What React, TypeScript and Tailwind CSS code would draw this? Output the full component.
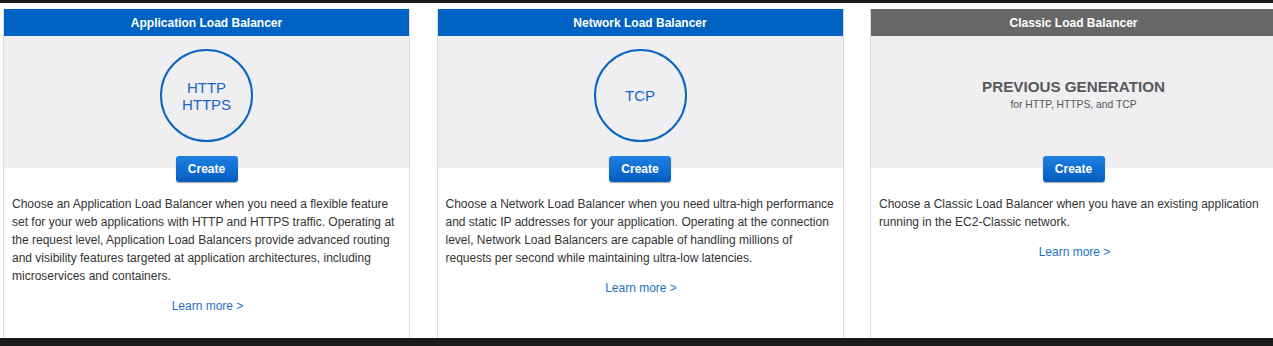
import React from "react";

interface Balancer {
  title: string;
  headerColor: string;
  kind: "circle" | "legacy";
  lines?: string[];
  description: string;
}

const balancers: Balancer[] = [
  {
    title: "Application Load Balancer",
    headerColor: "blue",
    kind: "circle",
    lines: ["HTTP", "HTTPS"],
    description:
      "Choose an Application Load Balancer when you need a flexible feature set for your web applications with HTTP and HTTPS traffic. Operating at the request level, Application Load Balancers provide advanced routing and visibility features targeted at application architectures, including microservices and containers.",
  },
  {
    title: "Network Load Balancer",
    headerColor: "blue",
    kind: "circle",
    lines: ["TCP"],
    description:
      "Choose a Network Load Balancer when you need ultra-high performance and static IP addresses for your application. Operating at the connection level, Network Load Balancers are capable of handling millions of requests per second while maintaining ultra-low latencies.",
  },
  {
    title: "Classic Load Balancer",
    headerColor: "gray",
    kind: "legacy",
    description:
      "Choose a Classic Load Balancer when you have an existing application running in the EC2-Classic network.",
  },
];

const BalancerCard: React.FC<{ item: Balancer }> = ({ item }) => {
  return (
    <div className="w-[407px] shrink-0 flex flex-col border-x border-[#dcdcdc] bg-white">
      {/* Header */}
      <div
        className={
          item.headerColor === "blue"
            ? "h-[27px] flex items-center justify-center bg-[#0063c3] text-white text-[12px] font-bold"
            : "h-[27px] flex items-center justify-center bg-[#676767] text-white text-[12px] font-bold"
        }
      >
        {item.title}
      </div>

      {/* Protocol area */}
      <div className="h-[132px] bg-[#efeef0] flex justify-center pt-[13px]">
        {item.kind === "circle" ? (
          <div className="w-[93px] h-[93px] rounded-full border-[2.5px] border-[#0a66c2] flex flex-col items-center justify-center text-[#1867c4] text-[15px] leading-[17px]">
            {item.lines?.map((l) => (
              <span key={l}>{l}</span>
            ))}
          </div>
        ) : (
          <div className="h-[93px] flex flex-col items-center justify-center">
            <span className="text-[15.2px] font-bold text-[#595959] leading-[18px]">
              PREVIOUS GENERATION
            </span>
            <span className="text-[10.3px] text-[#555] leading-[16px] mt-[1px]">
              for HTTP, HTTPS, and TCP
            </span>
          </div>
        )}
      </div>

      {/* Create */}
      <div className="flex justify-center -mt-[12px]">
        <button className="w-[62px] h-[26px] rounded-[3px] bg-gradient-to-b from-[#1d80e2] to-[#075cc0] text-white text-[12px] font-bold shadow-[0_1px_1px_rgba(0,0,0,0.35)]">
          Create
        </button>
      </div>

      {/* Body */}
      <div className="pl-[8px] pr-[6px] pt-[13px]">
        <p className="text-[12px] leading-[18px] text-[#333]">{item.description}</p>
        <div className="mt-[12px] text-center text-[12px] leading-[18px] text-[#1f6fc6]">
          Learn more &gt;
        </div>
      </div>
    </div>
  );
};

export default function App() {
  return (
    <div
      className="w-[1273px] h-[346px] overflow-hidden bg-white flex flex-col"
      style={{ fontFamily: '"Liberation Sans", Arial, sans-serif' }}
    >
      <div className="h-[3px] bg-[#1c1c1c] shrink-0" />
      <div className="flex-1 flex gap-[26.5px] pl-[3px] pt-[6px] overflow-hidden">
        {balancers.map((b) => (
          <BalancerCard key={b.title} item={b} />
        ))}
      </div>
      <div className="h-[8px] bg-[#1a1a1a] shrink-0" />
    </div>
  );
}
